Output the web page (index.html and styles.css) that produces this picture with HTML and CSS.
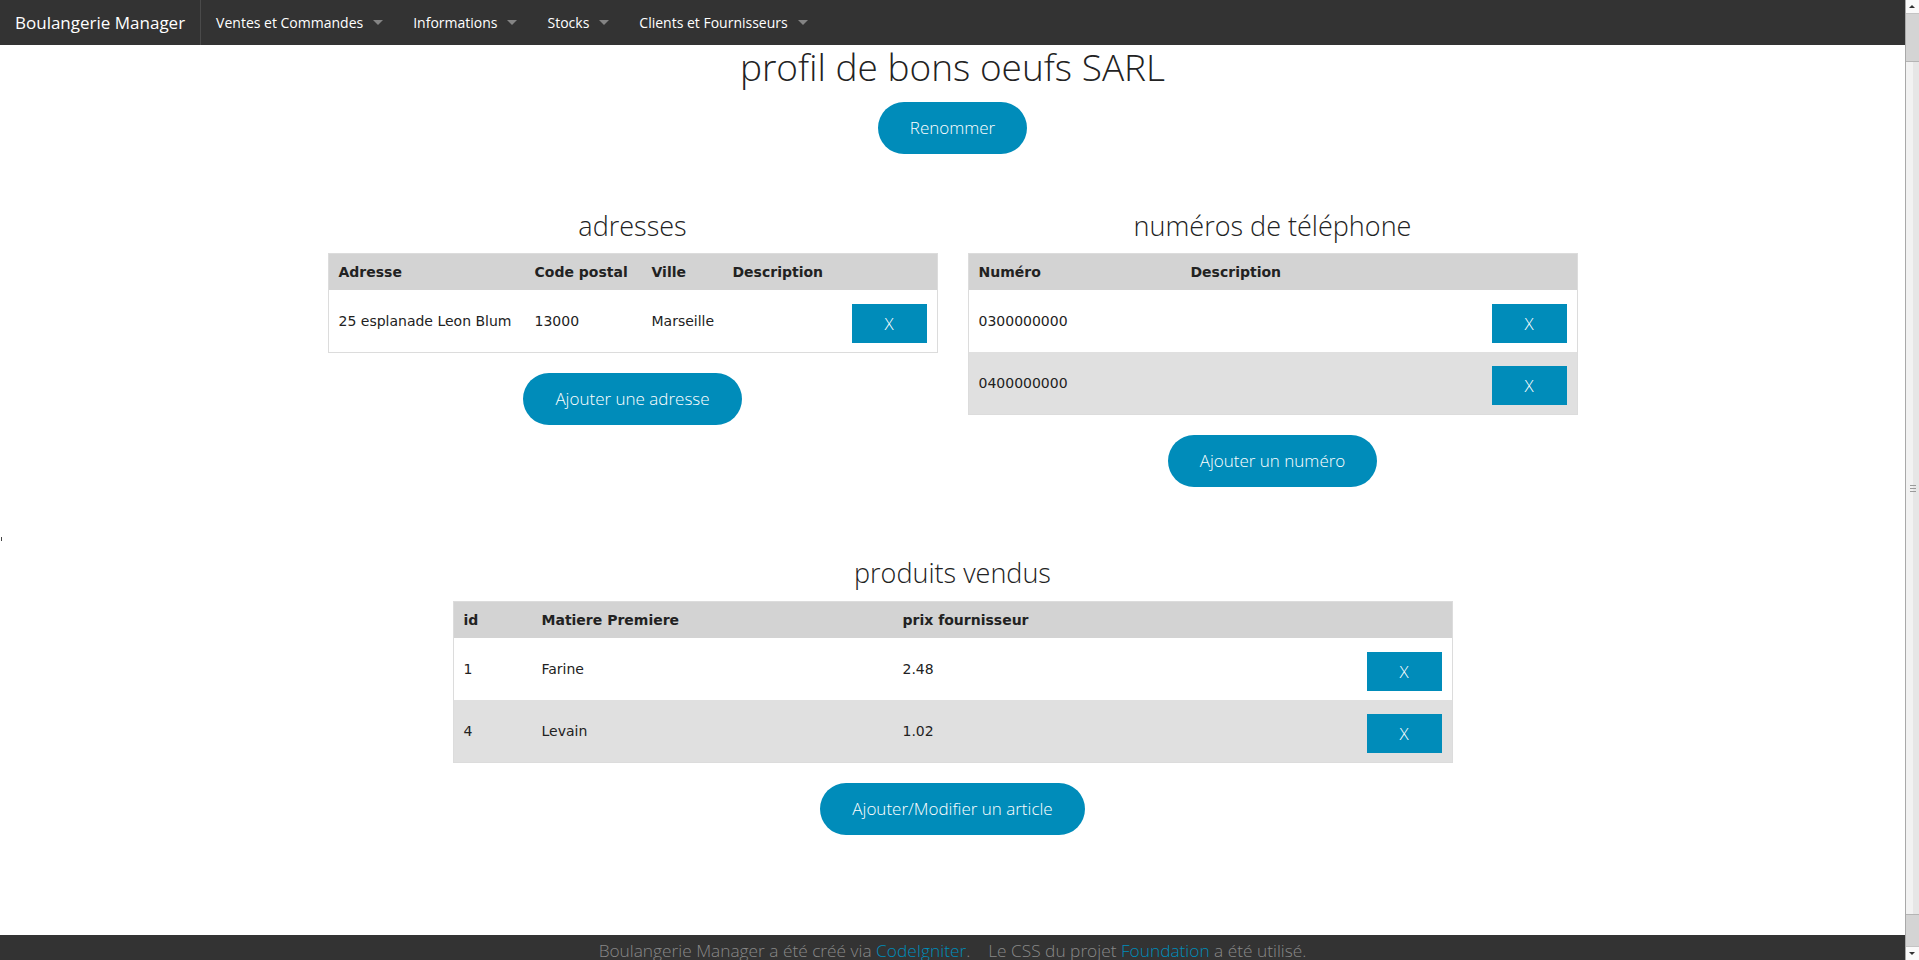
FILE: index.html
```html
<!DOCTYPE html>
<html lang="fr">
<head>
<meta charset="utf-8">
<title>Boulangerie Manager</title>
<link rel="stylesheet" href="styles.css">
</head>
<body>
<nav class="topbar">
  <div class="brand">Boulangerie Manager</div>
  <ul class="menu">
    <li class="dd">Ventes et Commandes</li>
    <li class="dd">Informations</li>
    <li class="dd">Stocks</li>
    <li class="dd">Clients et Fournisseurs</li>
  </ul>
</nav>
<main class="page">
  <h1 class="title">profil de bons oeufs SARL</h1>
  <a class="btn">Renommer</a>
  <div class="cols">
    <section class="col">
      <h3 class="sub">adresses</h3>
      <table class="data">
        <colgroup><col class="c-adr"><col class="c-cp"><col class="c-ville"><col class="c-desc"><col class="c-x"></colgroup>
        <thead><tr><th>Adresse</th><th>Code postal</th><th>Ville</th><th>Description</th><th></th></tr></thead>
        <tbody>
          <tr><td>25 esplanade Leon Blum</td><td>13000</td><td>Marseille</td><td></td><td><a class="xbtn">X</a></td></tr>
        </tbody>
      </table>
      <a class="btn add">Ajouter une adresse</a>
    </section>
    <section class="col">
      <h3 class="sub">numéros de téléphone</h3>
      <table class="data">
        <colgroup><col class="c-num"><col class="c-pdesc"><col class="c-x"></colgroup>
        <thead><tr><th>Numéro</th><th>Description</th><th></th></tr></thead>
        <tbody>
          <tr><td>0300000000</td><td></td><td><a class="xbtn">X</a></td></tr>
          <tr><td>0400000000</td><td></td><td><a class="xbtn">X</a></td></tr>
        </tbody>
      </table>
      <a class="btn add">Ajouter un numéro</a>
    </section>
  </div>
  <div class="stray"></div>
  <section class="products">
    <h3 class="sub sub-products">produits vendus</h3>
    <table class="data">
      <colgroup><col class="c-id"><col class="c-mat"><col class="c-prix"><col class="c-x"></colgroup>
      <thead><tr><th>id</th><th>Matiere Premiere</th><th>prix fournisseur</th><th></th></tr></thead>
      <tbody>
        <tr><td>1</td><td>Farine</td><td>2.48</td><td><a class="xbtn">X</a></td></tr>
        <tr><td>4</td><td>Levain</td><td>1.02</td><td><a class="xbtn">X</a></td></tr>
      </tbody>
    </table>
    <a class="btn add">Ajouter/Modifier un article</a>
  </section>
</main>
<footer class="foot">
  Boulangerie Manager a été créé via <a class="link">CodeIgniter</a>. &nbsp;&nbsp;&nbsp;Le CSS du projet <a class="link">Foundation</a> a été utilisé.
</footer>
<div class="scrollbar" aria-hidden="true">
  <div class="sb-btn sb-up"></div>
  <div class="sb-track">
    <div class="sb-thumb"><span class="grip"></span></div>
  </div>
  <div class="sb-btn sb-down"></div>
</div>
</body>
</html>
```

FILE: styles.css
```css
html, body {
  margin: 0;
  padding: 0;
}
body {
  font-family: "Open Sans", "DejaVu Sans", sans-serif;
  color: #222;
  background: #fff;
  padding-right: 14px;
}

/* top bar */
.topbar {
  display: flex;
  height: 45px;
  background: #333;
}
.brand {
  font-size: 17px;
  line-height: 45px;
  color: #fff;
  padding: 0 15px;
  border-right: 1px solid #4a4a4a;
}
.menu {
  display: flex;
  list-style: none;
  margin: 0;
  padding: 0;
}
.menu li {
  position: relative;
  padding: 0 35px 0 15px;
  font-size: 14px;
  line-height: 45px;
  color: #fff;
}
.menu li::after {
  content: "";
  position: absolute;
  right: 15px;
  top: 20px;
  border: 5px solid transparent;
  border-top-color: rgba(255, 255, 255, 0.4);
}

/* page */
.page {
  display: flex;
  flex-direction: column;
  align-items: center;
  padding-bottom: 100px;
}
.title {
  font-size: 37px;
  font-weight: 300;
  line-height: 44px;
  margin: 0 0 13px;
  color: #222;
}
.btn {
  display: inline-block;
  background: #008cba;
  color: #fff;
  font-size: 17px;
  font-weight: 300;
  line-height: 22px;
  padding: 15px 32px;
  border-radius: 1000px;
  cursor: pointer;
}
.btn.add {
  margin-top: 20px;
}

.cols {
  display: flex;
  align-items: flex-start;
  width: 1280px;
  margin-top: 56px;
}
.col {
  width: 640px;
  box-sizing: border-box;
  padding: 0 15px;
  display: flex;
  flex-direction: column;
  align-items: center;
}
.sub {
  font-size: 27px;
  font-weight: 300;
  line-height: 32px;
  margin: 0 0 11px;
  color: #222;
}
.sub-products {
  margin: 16px 0 12px;
}

.stray {
  align-self: flex-start;
  width: 1px;
  height: 4px;
  margin: 50px 0 0 1px;
  background: #444;
}

.products {
  width: 1000px;
  display: flex;
  flex-direction: column;
  align-items: center;
}

/* tables */
.data {
  width: 100%;
  table-layout: fixed;
  border-collapse: separate;
  border-spacing: 0;
  border: 1px solid #dcdcdc;
  font-family: "DejaVu Sans", sans-serif;
  font-size: 14px;
  color: #222;
}
.data th {
  background: #d3d3d3;
  font-weight: bold;
  text-align: left;
  padding: 9px 10px;
  line-height: 18px;
}
.data td {
  padding: 9px 10px;
  line-height: 18px;
  vertical-align: middle;
  white-space: nowrap;
}
.data tbody tr:nth-child(even) td {
  background: #e0e0e0;
}
.xbtn {
  display: block;
  width: 75px;
  height: 39px;
  line-height: 39px;
  margin: 5px 0 0 auto;
  background: #008cba;
  color: #fff;
  text-align: center;
  font-family: "Open Sans", sans-serif;
  font-size: 17px;
  font-weight: 300;
  cursor: pointer;
}

/* column widths (including the 10px cell padding on each side) */
.c-adr { width: 196px; }
.c-cp { width: 117px; }
.c-ville { width: 81px; }
.c-desc { width: 119px; }
.c-x { width: 95px; }
.c-num { width: 212px; }
.c-pdesc { width: 301px; }
.c-id { width: 78px; }
.c-mat { width: 361px; }
.c-prix { width: 464px; }

/* footer */
.foot {
  background: #333;
  color: #888;
  text-align: center;
  font-size: 17.3px;
  font-weight: 300;
  line-height: 24px;
  padding: 4px 0 89px;
}
.link {
  color: #008cba;
}

/* window scrollbar */
.scrollbar {
  position: fixed;
  top: 0;
  right: 0;
  width: 14px;
  height: 100vh;
  box-sizing: border-box;
  border-left: 1px solid #a9a9a9;
  display: flex;
  flex-direction: column;
  background: #d4d4d4;
}
.sb-btn {
  position: relative;
  height: 14px;
  flex: none;
  background: #fafafa;
  border-bottom: 1px solid #c4c4c4;
  box-sizing: border-box;
}
.sb-down {
  border-bottom: none;
  border-top: 1px solid #c4c4c4;
}
.sb-btn::after {
  content: "";
  position: absolute;
  left: 3px;
  border: 3.5px solid transparent;
}
.sb-up::after {
  top: 2px;
  border-bottom-color: #333;
}
.sb-down::after {
  top: 5px;
  border-top-color: #333;
}
.sb-track {
  flex: 1;
  display: flex;
  flex-direction: column;
  padding-top: 47px;
}
.sb-thumb {
  height: 854px;
  box-sizing: border-box;
  border-top: 1px solid #b4b4b4;
  border-bottom: 1px solid #b4b4b4;
  background: linear-gradient(to right, #f2f2f2 0, #f2f2f2 55%, #e6e6e6 55%, #e6e6e6 100%);
  display: flex;
  align-items: center;
  justify-content: center;
}
.grip {
  width: 6px;
  height: 5px;
  border-top: 1px solid #9a9a9a;
  border-bottom: 1px solid #9a9a9a;
  background: linear-gradient(#9a9a9a, #9a9a9a) center / 100% 1px no-repeat;
}
```
